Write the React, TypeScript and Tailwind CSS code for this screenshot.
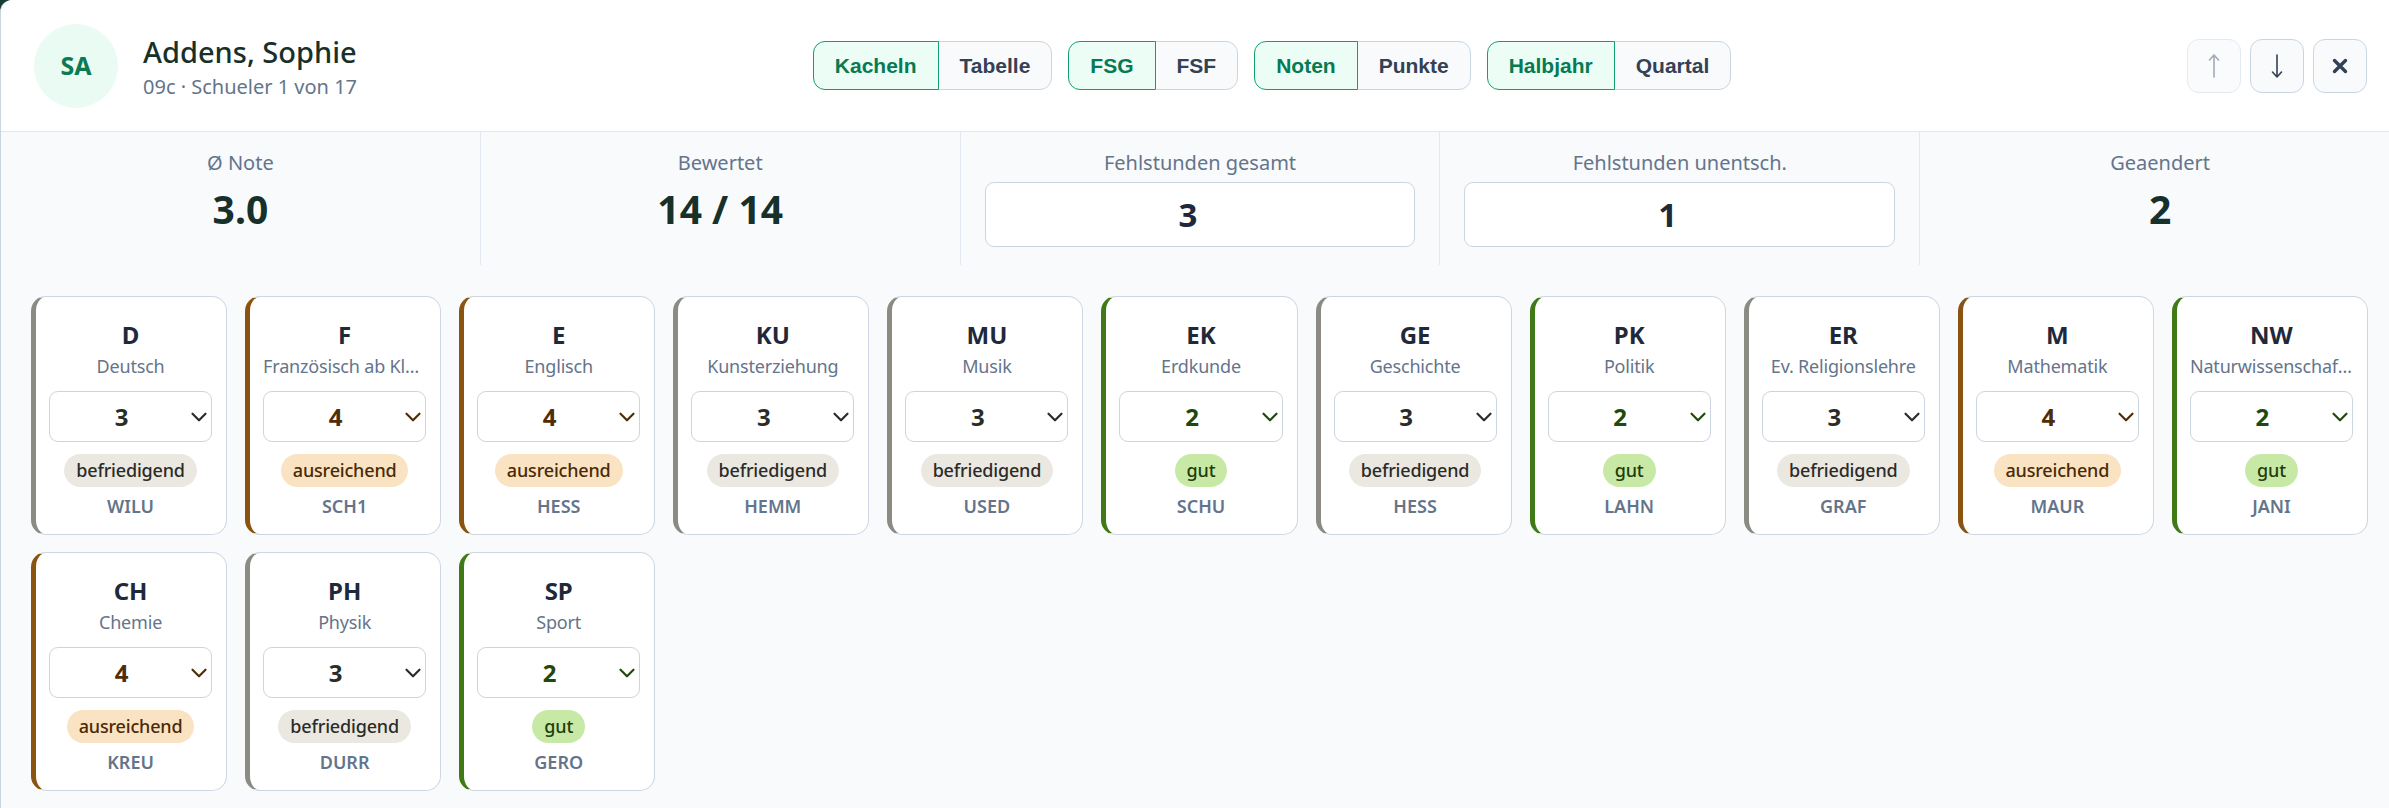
import { useState } from 'react';

type Subject = { code: string; name: string; grade: number; teacher: string };

const subjects: Subject[] = [
  { code: 'D', name: 'Deutsch', grade: 3, teacher: 'WILU' },
  { code: 'F', name: 'Französisch ab Klasse 6', grade: 4, teacher: 'SCH1' },
  { code: 'E', name: 'Englisch', grade: 4, teacher: 'HESS' },
  { code: 'KU', name: 'Kunsterziehung', grade: 3, teacher: 'HEMM' },
  { code: 'MU', name: 'Musik', grade: 3, teacher: 'USED' },
  { code: 'EK', name: 'Erdkunde', grade: 2, teacher: 'SCHU' },
  { code: 'GE', name: 'Geschichte', grade: 3, teacher: 'HESS' },
  { code: 'PK', name: 'Politik', grade: 2, teacher: 'LAHN' },
  { code: 'ER', name: 'Ev. Religionslehre', grade: 3, teacher: 'GRAF' },
  { code: 'M', name: 'Mathematik', grade: 4, teacher: 'MAUR' },
  { code: 'NW', name: 'Naturwissenschaften', grade: 2, teacher: 'JANI' },
  { code: 'CH', name: 'Chemie', grade: 4, teacher: 'KREU' },
  { code: 'PH', name: 'Physik', grade: 3, teacher: 'DURR' },
  { code: 'SP', name: 'Sport', grade: 2, teacher: 'GERO' },
];

const gradeStyles: { [key: number]: { border: string; text: string; badge: string; label: string } } = {
  2: { border: 'border-l-[#3f7a17]', text: 'text-[#1f4a0b]', badge: 'bg-[#c8e9a6] text-[#1f3d0b]', label: 'gut' },
  3: { border: 'border-l-[#8b8b84]', text: 'text-[#2b2b28]', badge: 'bg-[#eae8e1] text-[#2b2b28]', label: 'befriedigend' },
  4: { border: 'border-l-[#8a5310]', text: 'text-[#4f2d06]', badge: 'bg-[#f9e3c3] text-[#4a2a06]', label: 'ausreichend' },
};

const toggleGroups = [
  ['Kacheln', 'Tabelle'],
  ['FSG', 'FSF'],
  ['Noten', 'Punkte'],
  ['Halbjahr', 'Quartal'],
];

function SubjectCard({ subject }: { subject: Subject }) {
  const [grade, setGrade] = useState(subject.grade);
  const g = gradeStyles[grade] ?? gradeStyles[3];

  return (
    <div
      className={`flex min-w-0 flex-col items-center rounded-[15px] border border-[#cdd6e2] border-l-[5px] ${g.border} bg-white pt-[20px] pb-[15px] pl-[13px] pr-[14px]`}
    >
      <div className="text-[24px] leading-[36px] font-bold text-[#1e293b]">{subject.code}</div>
      <div className="w-full truncate text-center text-[18px] leading-[27px] tracking-[-0.01em] text-[#64748b]">
        {subject.name}
      </div>
      <div className="relative mt-[11px] w-full">
        <select
          value={grade}
          onChange={(e) => setGrade(parseInt(e.target.value))}
          className={`h-[51px] w-full appearance-none rounded-[9px] border border-[#cbd5e1] bg-white pl-[12px] pr-[30px] text-center [text-align-last:center] text-[24px] font-bold ${g.text}`}
        >
          {[1, 2, 3, 4, 5, 6].map((n) => (
            <option key={n} value={n}>
              {n}
            </option>
          ))}
        </select>
        <svg
          className={`pointer-events-none absolute right-0 top-1/2 -translate-y-1/2 ${g.text}`}
          width="26"
          height="26"
          viewBox="0 0 24 24"
          fill="none"
          stroke="currentColor"
          strokeWidth="2"
          strokeLinecap="round"
          strokeLinejoin="round"
        >
          <path d="m6 9 6 6 6-6" />
        </svg>
      </div>
      <span className={`mt-[12px] rounded-full px-[12px] text-[18px] leading-[33px] tracking-[-0.01em] font-medium ${g.badge}`}>
        {g.label}
      </span>
      <div className="mt-[7px] text-[18px] leading-[25px] font-semibold text-[#64748b]">{subject.teacher}</div>
    </div>
  );
}

export default function App() {
  const [active, setActive] = useState(['Kacheln', 'FSG', 'Noten', 'Halbjahr']);
  const [fehlGesamt, setFehlGesamt] = useState('3');
  const [fehlUnent, setFehlUnent] = useState('1');

  return (
    <div className="h-[808px] w-full overflow-hidden bg-[#173f31] font-['Noto_Sans',sans-serif]">
      <div className="flex h-full w-[2400px] flex-col rounded-tl-[12px] border-l border-[#cbd5e1] bg-[#f8fafc]">
        {/* Header */}
        <div className="flex h-[132px] items-center rounded-tl-[12px] border-b border-[#e2e8f0] bg-white px-[33px]">
          <div className="flex items-center">
            <div className="flex h-[84px] w-[84px] items-center justify-center rounded-full bg-[#eafbf3] text-[25px] font-bold text-[#0c7a52]">
              SA
            </div>
            <div className="ml-[25px]">
              <div className="text-[29px] leading-[42px] font-medium text-[#18302a]">Addens, Sophie</div>
              <div className="text-[20px] leading-[28px] text-[#64748b]">09c · Schueler 1 von 17</div>
            </div>
          </div>

          <div className="flex flex-1 justify-center gap-[16px]">
            {toggleGroups.map((group, gi) => (
              <div key={gi} className="flex">
                {group.map((label, i) => {
                  const isActive = active[gi] === label;
                  return (
                    <button
                      key={label}
                      onClick={() => setActive(active.map((a, j) => (j === gi ? label : a)))}
                      className={`h-[49px] border px-[21px] font-['Liberation_Sans',Arial,sans-serif] text-[21px] font-bold ${
                        i === 0 ? 'rounded-l-[12px]' : '-ml-px rounded-r-[12px]'
                      } ${
                        isActive
                          ? 'relative z-10 border-[#10a070] bg-[#ecfdf5] text-[#067a52]'
                          : 'border-[#cbd5e1] bg-[#f8fafc] text-[#334155]'
                      }`}
                    >
                      {label}
                    </button>
                  );
                })}
              </div>
            ))}
          </div>

          <div className="flex gap-[9px]">
            <button disabled className="flex h-[54px] w-[54px] items-center justify-center rounded-[12px] border border-[#e5eaf0] bg-[#f9fbfc] text-[#a3abb6]">
              <svg width="14" height="28" viewBox="0 0 14 28" fill="none" stroke="currentColor" strokeWidth="1.6" strokeLinecap="round" strokeLinejoin="round">
                <path d="M7 3v22M2.5 8 7 3l4.5 5" />
              </svg>
            </button>
            <button className="flex h-[54px] w-[54px] items-center justify-center rounded-[12px] border border-[#cbd5e1] bg-[#f8fafc] text-[#334155]">
              <svg width="14" height="28" viewBox="0 0 14 28" fill="none" stroke="currentColor" strokeWidth="1.6" strokeLinecap="round" strokeLinejoin="round">
                <path d="M7 3v22M2.5 20 7 25l4.5-5" />
              </svg>
            </button>
            <button className="flex h-[54px] w-[54px] items-center justify-center rounded-[12px] border border-[#cbd5e1] bg-[#f8fafc] text-[#334155]">
              <svg width="16" height="16" viewBox="0 0 16 16" fill="none" stroke="currentColor" strokeWidth="3.4" strokeLinecap="round">
                <path d="M2.5 2.5l11 11M13.5 2.5l-11 11" />
              </svg>
            </button>
          </div>
        </div>

        {/* Stats */}
        <div className="grid grid-cols-5">
          <div className="flex flex-col items-center border-r border-[#e2e8f0] px-[24px] pt-[17px] pb-[18px]">
            <div className="text-[20px] leading-[28px] text-[#64748b]">Ø Note</div>
            <div className="mt-[8px] text-[39px] leading-[48px] font-bold text-[#17302a]">3.0</div>
          </div>
          <div className="flex flex-col items-center border-r border-[#e2e8f0] px-[24px] pt-[17px] pb-[18px]">
            <div className="text-[20px] leading-[28px] text-[#64748b]">Bewertet</div>
            <div className="mt-[8px] text-[39px] leading-[48px] font-bold text-[#17302a]">14 / 14</div>
          </div>
          <div className="flex flex-col items-center border-r border-[#e2e8f0] px-[24px] pt-[17px] pb-[18px]">
            <div className="text-[20px] leading-[28px] text-[#64748b]">Fehlstunden gesamt</div>
            <input
              value={fehlGesamt}
              onChange={(e) => setFehlGesamt(e.target.value)}
              className="mt-[5px] h-[65px] w-full rounded-[9px] border border-[#cbd5e1] bg-white pl-[12px] pr-[36px] text-center text-[33px] font-bold text-[#1e293b]"
            />
          </div>
          <div className="flex flex-col items-center border-r border-[#e2e8f0] px-[24px] pt-[17px] pb-[18px]">
            <div className="text-[20px] leading-[28px] text-[#64748b]">Fehlstunden unentsch.</div>
            <input
              value={fehlUnent}
              onChange={(e) => setFehlUnent(e.target.value)}
              className="mt-[5px] h-[65px] w-full rounded-[9px] border border-[#cbd5e1] bg-white pl-[12px] pr-[36px] text-center text-[33px] font-bold text-[#1e293b]"
            />
          </div>
          <div className="flex flex-col items-center px-[24px] pt-[17px] pb-[18px]">
            <div className="text-[20px] leading-[28px] text-[#64748b]">Geaendert</div>
            <div className="mt-[8px] text-[39px] leading-[48px] font-bold text-[#17302a]">2</div>
          </div>
        </div>

        {/* Subject cards */}
        <div className="grid grid-cols-11 gap-x-[18px] gap-y-[17px] pt-[31px] pl-[30px] pr-[32px]">
          {subjects.map((s) => (
            <SubjectCard key={s.code} subject={s} />
          ))}
        </div>
      </div>
    </div>
  );
}
